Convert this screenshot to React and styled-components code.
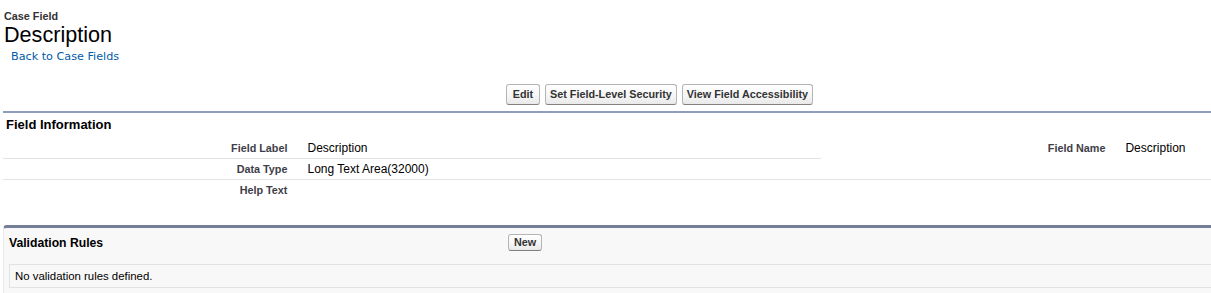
import React from "react"
import styled, { createGlobalStyle } from "styled-components"

const Global = createGlobalStyle`
  html, body {
    margin: 0;
    padding: 0;
    overflow: hidden;
    background: #fff;
  }
  body {
    font-family: "Liberation Sans", Arial, sans-serif;
    color: #000;
  }
`

const Page = styled.div`
  width: 1636px;
  padding: 0 0 0 3px;
`

const TitleBar = styled.div`
  padding: 10px 0 0 1px;
`

const PageType = styled.div`
  font-size: 10.8px;
  line-height: 13px;
  font-weight: bold;
  color: #333;
`

const PageTitle = styled.h1`
  margin: 0;
  font-size: 21.6px;
  line-height: 24px;
  font-weight: normal;
  color: #000;
`

const Crumb = styled.a`
  display: block;
  width: max-content;
  margin: 3px 0 0 7px;
  font-family: "DejaVu Sans", Verdana, sans-serif;
  font-size: 11.2px;
  line-height: 14px;
  color: #015ba7;
  text-decoration: none;
`

const HeaderRow = styled.div`
  display: grid;
  grid-template-columns: ${(p) => p.$title}px 1fr;
  align-items: center;
  padding: ${(p) => p.$pad};
`

const Buttons = styled.div`
  display: flex;
  gap: 5px;
`

const Btn = styled.button`
  min-width: ${(p) => (p.$small ? 0 : 34)}px;
  font-family: "Liberation Sans", Arial, sans-serif;
  font-size: 10.8px;
  line-height: 13px;
  font-weight: bold;
  color: #333;
  padding: ${(p) => (p.$small ? "1px 5px" : "3px 4px")};
  border: 1px solid #b5b5b5;
  border-bottom-color: #7f7f7f;
  border-radius: 3px;
  background: linear-gradient(to bottom, #ffffff 0%, #f6f6f6 55%, #e9e9e9 100%);
  cursor: pointer;
`

const DetailBlock = styled.section`
  margin-top: 6px;
  border-top: 2px solid #8e9dbe;
`

const BlockTitle = styled.h3`
  margin: 0;
  font-size: ${(p) => p.$size || 13}px;
  line-height: 16px;
  font-weight: bold;
  color: #000;
`

const InfoHeader = styled.div`
  padding: 4px 0 0 3px;
`

const DetailGrid = styled.div`
  display: grid;
  grid-template-columns: 18% 32% 18% 32%;
  margin-top: 5px;
`

const Cell = styled.div`
  padding: 4px 0 3px;
  line-height: 13px;
  min-height: 13px;
  border-bottom: 1px solid ${(p) => (p.$line ? "#e3e3e3" : "transparent")};
`

const Label = styled(Cell)`
  padding-right: 10px;
  text-align: right;
  font-size: 10.8px;
  font-weight: bold;
  color: #3e3e48;
`

const Value = styled(Cell)`
  padding-left: 10px;
  font-size: 12px;
  color: #000;
`

const RulesBlock = styled.section`
  margin-top: 24px;
  background: #f8f8f8;
  border: 1px solid #eaeaea;
  border-top: 3px solid #747e96;
  border-radius: 4px;
  padding-bottom: 10px;
`

const RulesBody = styled.div`
  margin: 13px 12px 0 5px;
  padding: 4px 5px;
  border: 1px solid #e0e3e5;
  font-size: 11.4px;
  line-height: 14px;
  color: #000;
`

const rows = [
  [
    { label: "Field Label", value: "Description", line: true },
    { label: "Field Name", value: "Description", line: false },
  ],
  [
    { label: "Data Type", value: "Long Text Area(32000)", line: true },
    { label: "", value: "", line: true },
  ],
  [
    { label: "Help Text", value: "", line: false },
    { label: "", value: "", line: false },
  ],
]

export default function App() {
  return (
    <>
      <Global />
      <Page>
        <TitleBar>
          <PageType>Case Field</PageType>
          <PageTitle>Description</PageTitle>
          <Crumb href="#">Back to Case Fields</Crumb>
        </TitleBar>

        <HeaderRow $title={503} $pad="20px 0 0">
          <div />
          <Buttons>
            <Btn>Edit</Btn>
            <Btn>Set Field-Level Security</Btn>
            <Btn>View Field Accessibility</Btn>
          </Buttons>
        </HeaderRow>

        <DetailBlock>
          <InfoHeader>
            <BlockTitle>Field Information</BlockTitle>
          </InfoHeader>
          <DetailGrid>
            {rows.map((row, r) =>
              row.map((c, i) => (
                <React.Fragment key={`${r}-${i}`}>
                  <Label $line={c.line}>{c.label}</Label>
                  <Value $line={c.line}>{c.value}</Value>
                </React.Fragment>
              ))
            )}
          </DetailGrid>
        </DetailBlock>

        <RulesBlock>
          <HeaderRow $title={499} $pad="6px 0 0 5px">
            <BlockTitle $size={12.2}>Validation Rules</BlockTitle>
            <Buttons>
              <Btn $small>New</Btn>
            </Buttons>
          </HeaderRow>
          <RulesBody>No validation rules defined.</RulesBody>
        </RulesBlock>
      </Page>
    </>
  )
}
